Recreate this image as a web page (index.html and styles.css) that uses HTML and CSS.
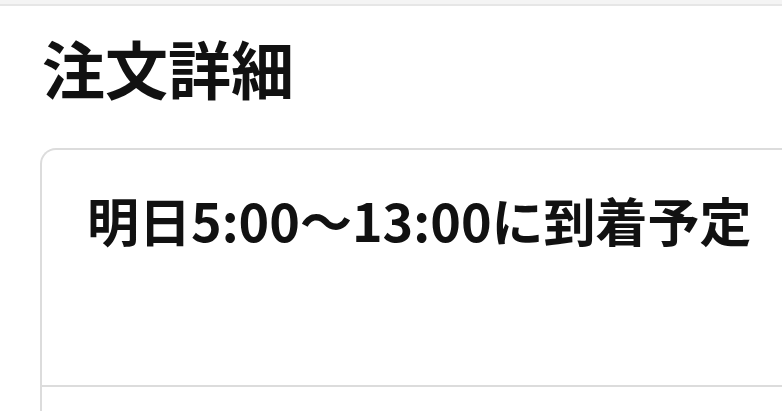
FILE: index.html
```html
<!DOCTYPE html>
<html>
<head>
    <title>注文詳細</title>
    <link rel="stylesheet" href="styles.css">
</head>
<body>
    <div class="top-bar"></div>
    <div class="page">
        <h1 class="page-title">注文詳細</h1>
        <div class="order-card">
            <div class="delivery">
                <p class="delivery-eta">明日5:00〜13:00に到着予定</p>
            </div>
            <div class="order-items"></div>
        </div>
    </div>
</body>
</html>
```

FILE: styles.css
```css
body {
    margin: 0;
    background-color: #fff;
    font-family: "Noto Sans CJK JP", "Noto Sans", sans-serif;
    color: #111;
    overflow: hidden;
    height: 412px;
}
.top-bar {
    height: 4px;
    background-color: #f4f4f4;
    border-bottom: 2px solid #e6e6e6;
}
.page {
    padding: 0 0 0 40px;
}
.page-title {
    margin: 0;
    padding: 17px 0 0 2px;
    font-size: 63px;
    font-weight: 700;
    line-height: 88px;
}
.order-card {
    margin-top: 37px;
    border: 2px solid #dcdcdc;
    border-right: none;
    border-bottom: none;
    border-radius: 16px 0 0 0;
}
.delivery {
    height: 235px;
    padding: 0 0 0 45px;
    border-bottom: 2px solid #dcdcdc;
}
.delivery-eta {
    margin: 0;
    padding-top: 30px;
    font-size: 52px;
    font-weight: 700;
    line-height: 80px;
    white-space: nowrap;
}
.order-items {
    height: 24px;
}
```
